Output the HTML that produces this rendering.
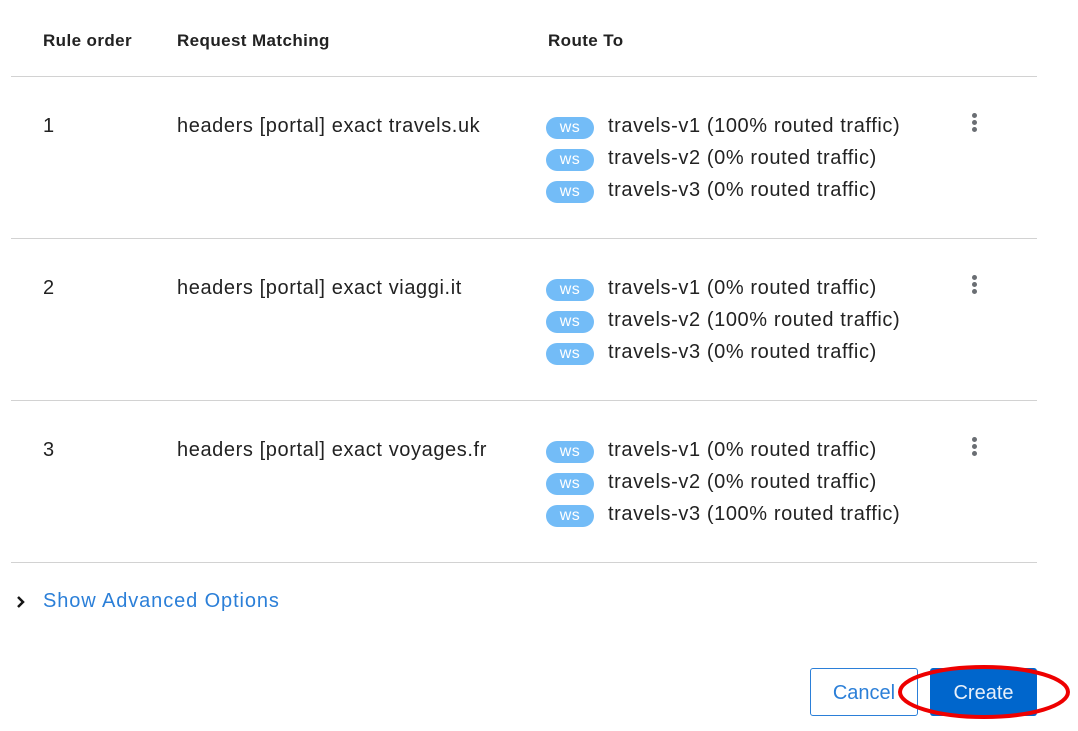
<!DOCTYPE html>
<html><head><style>
body{margin:0;width:1078px;height:731px;background:#fff;font-family:"Liberation Sans",sans-serif;color:#151515;position:relative;overflow:hidden}
.a{position:absolute;white-space:nowrap}
.h{font-weight:bold;font-size:17px;top:31px;letter-spacing:0.4px;color:#222}
.line{position:absolute;left:11px;width:1026px;height:1px;background:#d2d2d2}
.t{font-size:20px;letter-spacing:0.6px;color:#222}
.b{position:absolute;left:546px;width:48px;height:22px;border-radius:11px;background:#73bcf7;color:#fff;font-size:16px;text-align:center;line-height:22px;letter-spacing:0.5px}
.k{position:absolute;left:972px;width:5px}
.k i{display:block;width:5px;height:5px;border-radius:50%;background:#6a6e73;margin-bottom:2px}
</style></head><body>
<div class="a h" style="left:43px">Rule order</div>
<div class="a h" style="left:177px">Request Matching</div>
<div class="a h" style="left:548px">Route To</div>
<div class="line" style="top:76px"></div>
<div class="line" style="top:238px"></div>
<div class="line" style="top:400px"></div>
<div class="line" style="top:562px"></div>

<div class="a t" style="left:43px;top:115px">1</div>
<div class="a t" style="left:177px;top:115px">headers [portal] exact travels.uk</div>
<div class="b" style="top:117px">ws</div><div class="a t" style="left:608px;top:115px">travels-v1 (100% routed traffic)</div>
<div class="b" style="top:149px">ws</div><div class="a t" style="left:608px;top:147px">travels-v2 (0% routed traffic)</div>
<div class="b" style="top:181px">ws</div><div class="a t" style="left:608px;top:179px">travels-v3 (0% routed traffic)</div>
<div class="k" style="top:113px"><i></i><i></i><i></i></div>

<div class="a t" style="left:43px;top:277px">2</div>
<div class="a t" style="left:177px;top:277px">headers [portal] exact viaggi.it</div>
<div class="b" style="top:279px">ws</div><div class="a t" style="left:608px;top:277px">travels-v1 (0% routed traffic)</div>
<div class="b" style="top:311px">ws</div><div class="a t" style="left:608px;top:309px">travels-v2 (100% routed traffic)</div>
<div class="b" style="top:343px">ws</div><div class="a t" style="left:608px;top:341px">travels-v3 (0% routed traffic)</div>
<div class="k" style="top:275px"><i></i><i></i><i></i></div>

<div class="a t" style="left:43px;top:439px">3</div>
<div class="a t" style="left:177px;top:439px">headers [portal] exact voyages.fr</div>
<div class="b" style="top:441px">ws</div><div class="a t" style="left:608px;top:439px">travels-v1 (0% routed traffic)</div>
<div class="b" style="top:473px">ws</div><div class="a t" style="left:608px;top:471px">travels-v2 (0% routed traffic)</div>
<div class="b" style="top:505px">ws</div><div class="a t" style="left:608px;top:503px">travels-v3 (100% routed traffic)</div>
<div class="k" style="top:437px"><i></i><i></i><i></i></div>

<svg class="a" style="left:15px;top:595px" width="12" height="14"><path d="M3 2l5 5-5 5" fill="none" stroke="#151515" stroke-width="2.5"/></svg>
<div class="a t" style="left:43px;top:590px;color:#2b7fd8;letter-spacing:0.9px">Show Advanced Options</div>

<div class="a" style="left:810px;top:668px;width:106px;height:46px;border:1px solid #2b7fd8;border-radius:3px;color:#2b7fd8;font-size:20px;text-align:center;line-height:48px">Cancel</div>
<div class="a" style="left:930px;top:668px;width:107px;height:48px;background:#0066cc;border-radius:3px;color:#e8f0fa;font-size:20px;text-align:center;line-height:50px">Create</div>
<svg class="a" style="left:0;top:0" width="1078" height="731"><ellipse cx="984" cy="692" rx="84" ry="25" fill="none" stroke="#ee0000" stroke-width="4"/></svg>
</body></html>
